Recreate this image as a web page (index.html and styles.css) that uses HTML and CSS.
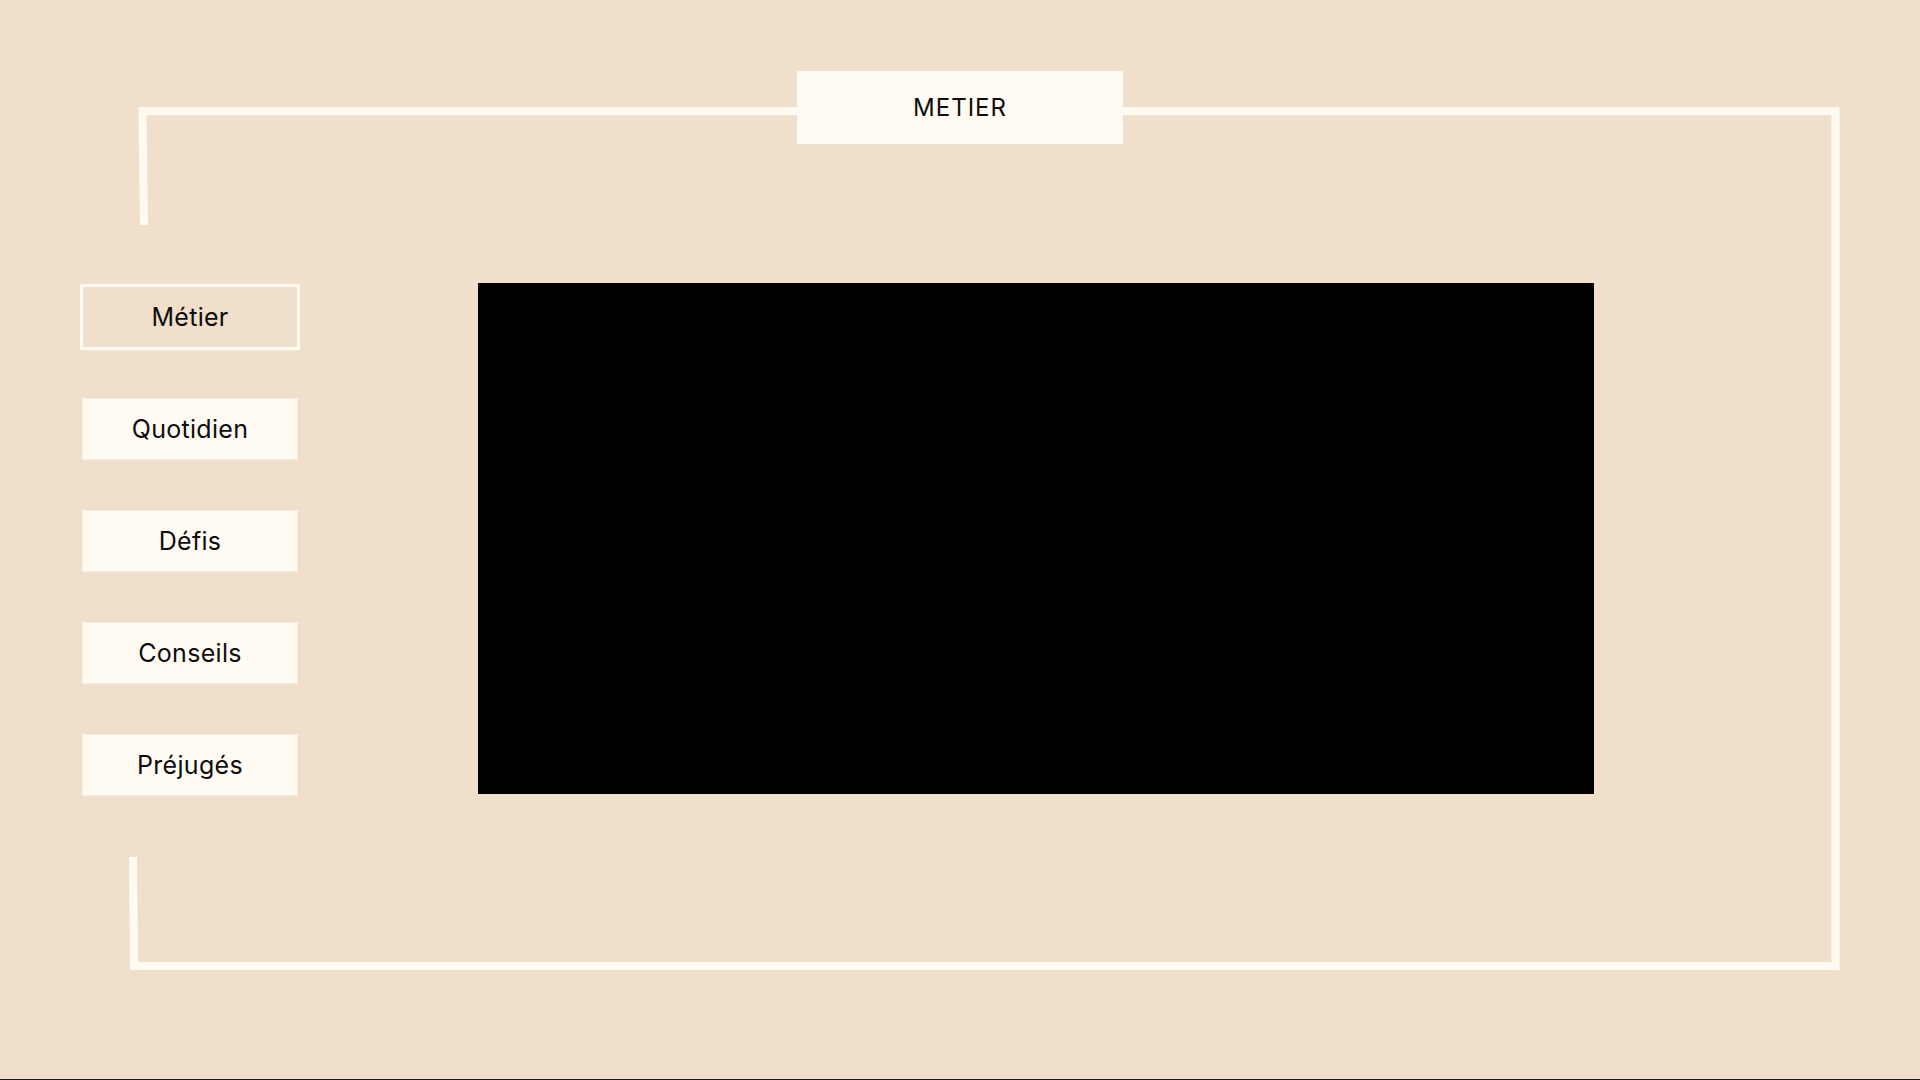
FILE: index.html
```html
<!DOCTYPE html>
<html lang="fr">
<head>
<meta charset="utf-8">
<title>METIER</title>
<link rel="stylesheet" href="styles.css">
</head>
<body>
<div class="page">
  <svg class="frame" width="1920" height="1080" viewBox="0 0 1920 1080" aria-hidden="true">
    <polyline points="144,225 142.5,111 1835.5,111 1835.5,966 134,966 133,857" fill="none" stroke="#FFFBF3" stroke-width="8" stroke-linejoin="miter"/>
  </svg>
  <header class="title-box">METIER</header>
  <main class="content">
    <nav class="sidebar">
      <button class="nav-btn active">Métier</button>
      <button class="nav-btn">Quotidien</button>
      <button class="nav-btn">Défis</button>
      <button class="nav-btn">Conseils</button>
      <button class="nav-btn">Préjugés</button>
    </nav>
    <div class="video"></div>
  </main>
</div>
</body>
</html>
```
FILE: styles.css
```css
* { box-sizing: border-box; }
html, body { margin: 0; padding: 0; }
body {
  background: #F0DFCA;
  font-family: Inter, "Noto Sans", sans-serif;
  color: #0d0d0d;
}
.page {
  position: relative;
  width: 1920px;
  height: 1080px;
  padding-top: 71px;
  border-bottom: 1px solid #1a1a1a;
  overflow: hidden;
}
.frame {
  position: absolute;
  left: 0;
  top: 0;
  pointer-events: none;
}
.title-box {
  position: relative;
  width: 326px;
  height: 73px;
  margin: 0 auto;
  background: #FFFBF3;
  display: flex;
  align-items: center;
  justify-content: center;
  font-size: 24px;
  letter-spacing: 1px;
  font-weight: 400;
}
.content {
  display: flex;
  align-items: flex-start;
  margin-top: 139px;
}
.sidebar {
  display: flex;
  flex-direction: column;
  gap: 52px;
  width: 214px;
  margin-left: 83px;
  margin-top: 4px;
}
.nav-btn {
  width: 214px;
  height: 60px;
  border: none;
  background: #FFFBF3;
  font-family: Inter, "Noto Sans", sans-serif;
  font-size: 25px;
  letter-spacing: 0.3px;
  color: #0d0d0d;
  padding: 0;
  box-shadow: 0 0 0 1px rgba(255, 251, 243, 0.5);
}
.nav-btn.active {
  background: transparent;
  box-shadow: 0 0 0 3px #FFFBF3;
}
.video {
  width: 1116px;
  height: 511px;
  margin-left: 181px;
  background: #000;
}
```
